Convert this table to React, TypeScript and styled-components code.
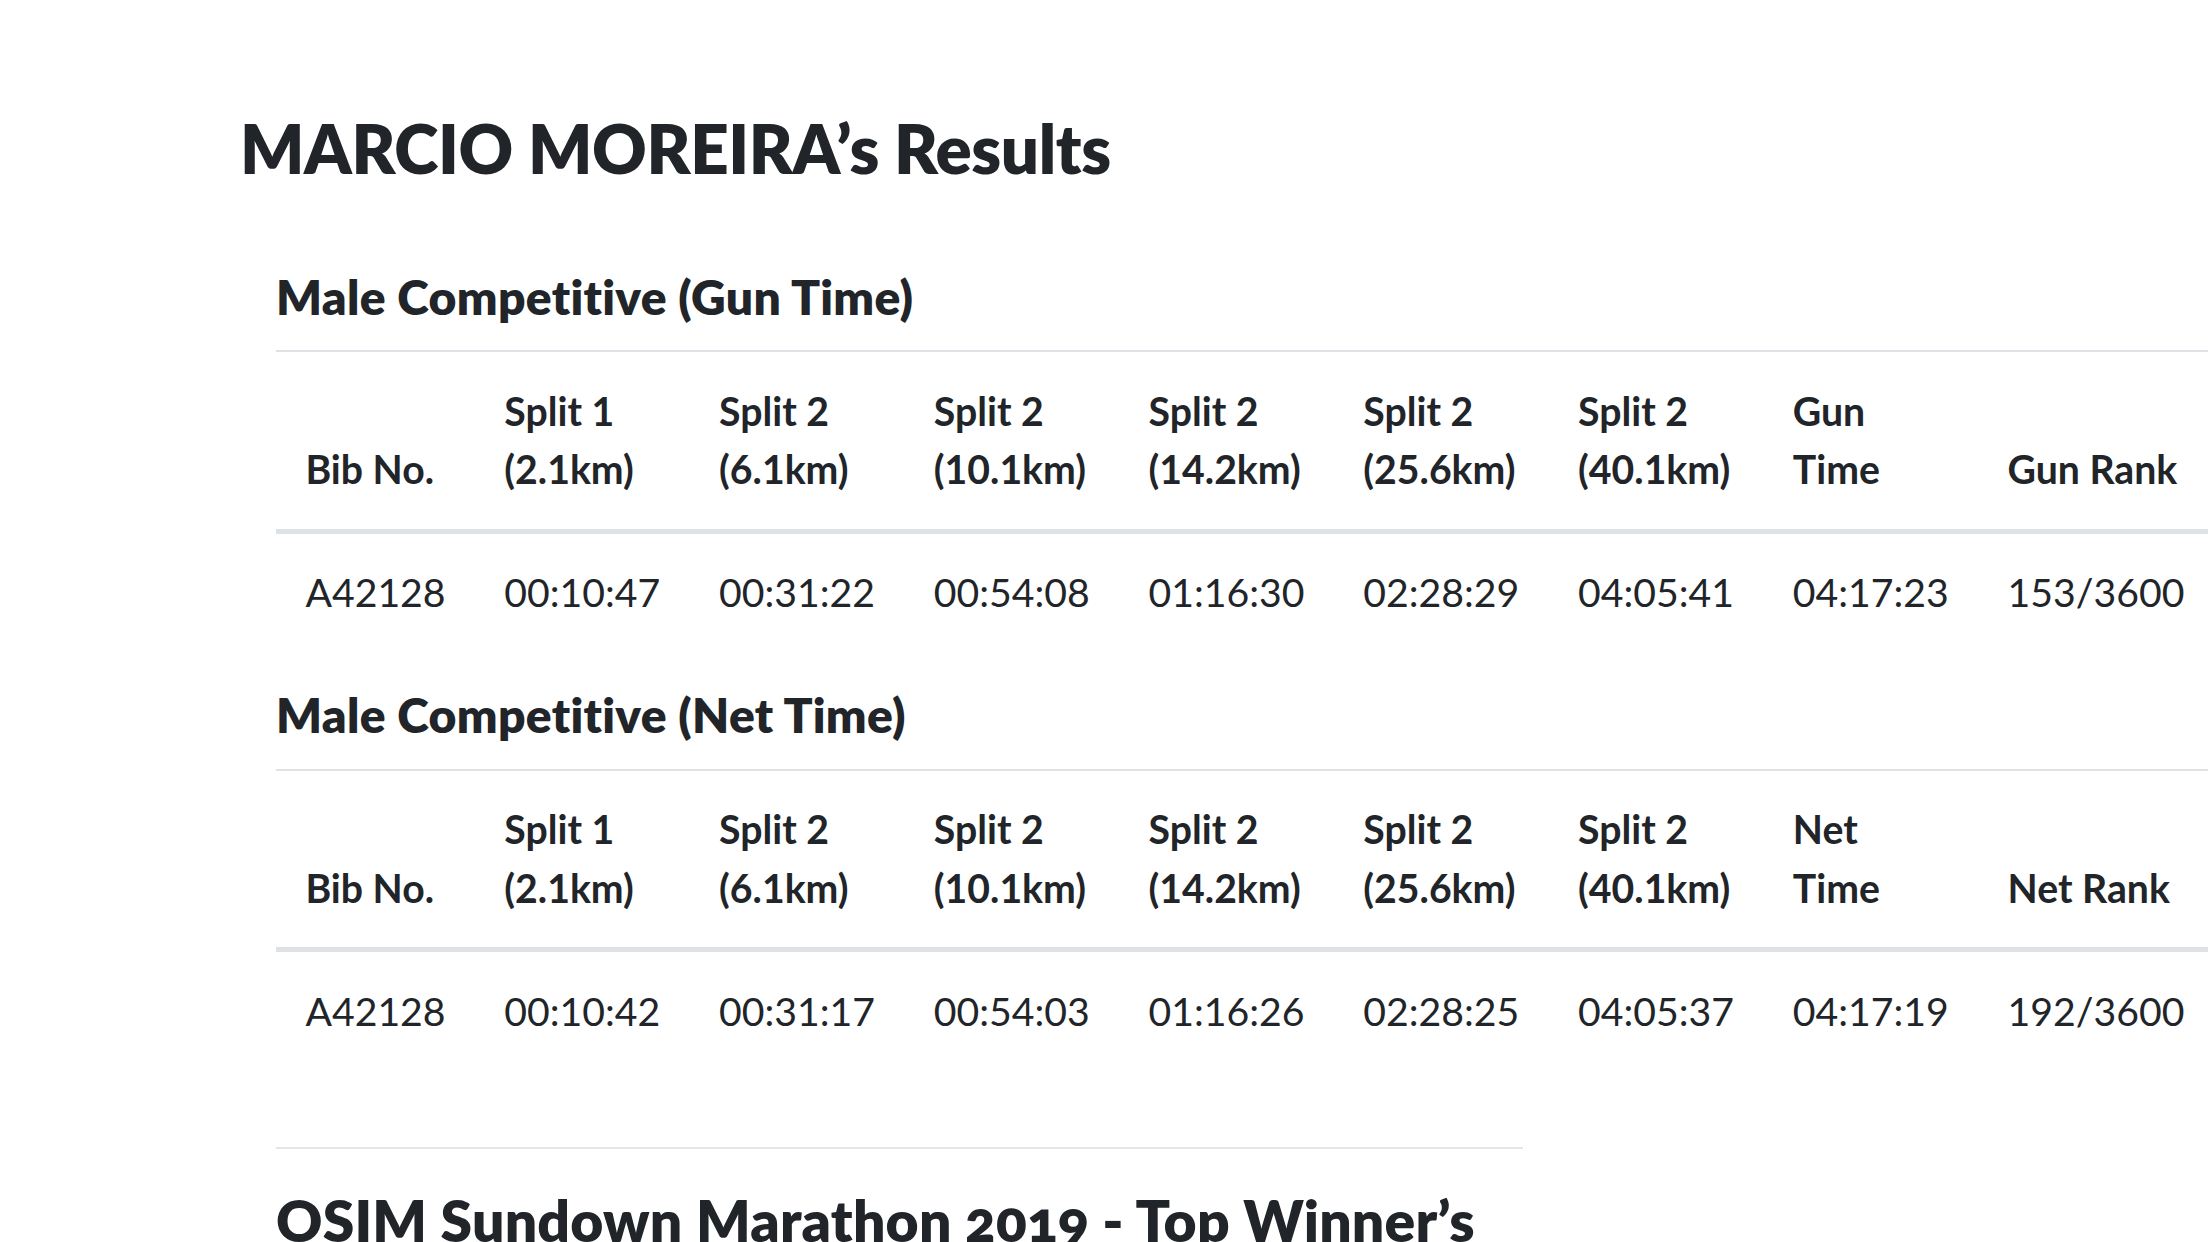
import styled, { createGlobalStyle } from 'styled-components'

const GlobalStyle = createGlobalStyle`
  html, body {
    margin: 0;
    padding: 0;
    overflow: hidden;
    background: #fff;
  }

  body {
    font-family: "Lato", "Open Sans", sans-serif;
    color: #212529;
  }
`

const Page = styled.main`
  width: 1728px;
  margin: 0 auto;
  padding-top: 108px;
`

const PageTitle = styled.h1`
  margin: 0 0 79px;
  font-family: "Lato", sans-serif;
  font-size: 67.2px;
  font-weight: 800;
  line-height: 1.2;
  letter-spacing: -0.4px;
`

const Content = styled.section`
  padding: 0 36px;
`

const CategoryTitle = styled.h5`
  margin: 0 0 25px;
  font-family: "Lato", sans-serif;
  font-size: 48px;
  font-weight: 800;
  line-height: 1.2;
  letter-spacing: 0.3px;
`

const Table = styled.table`
  width: 100%;
  margin-bottom: 35px;
  border-collapse: collapse;
  font-size: 39.2px;
  line-height: 1.5;
`

const HeadCell = styled.th`
  padding: 29.4px;
  text-align: left;
  vertical-align: bottom;
  font-weight: 700;
  border-top: 2px solid #dee2e6;
  border-bottom: 5px solid #dee2e6;
`

const Cell = styled.td`
  padding: 29.4px;
  vertical-align: top;
  font-weight: 400;
  border-top: 2px solid #dee2e6;
`

const Divider = styled.hr`
  width: 1247px;
  margin: 77.5px 0 37px;
  border: 0;
  border-top: 2.4px solid rgba(0, 0, 0, 0.1);
`

const EventTitle = styled.h3`
  width: 1247px;
  margin: 0;
  font-family: "Lato", sans-serif;
  font-size: 57px;
  font-weight: 800;
  line-height: 1.2;
  letter-spacing: 0.2px;
  font-variant-numeric: oldstyle-nums;
`

type Result = {
  title: string
  timeLabel: string
  rankLabel: string
  bib: string
  splits: string[]
  time: string
  rank: string
}

const splitNames = [
  ['Split 1', '(2.1km)'],
  ['Split 2', '(6.1km)'],
  ['Split 2', '(10.1km)'],
  ['Split 2', '(14.2km)'],
  ['Split 2', '(25.6km)'],
  ['Split 2', '(40.1km)'],
]

const results: Result[] = [
  {
    title: 'Male Competitive (Gun Time)',
    timeLabel: 'Gun Time',
    rankLabel: 'Gun Rank',
    bib: 'A42128',
    splits: ['00:10:47', '00:31:22', '00:54:08', '01:16:30', '02:28:29', '04:05:41'],
    time: '04:17:23',
    rank: '153/3600',
  },
  {
    title: 'Male Competitive (Net Time)',
    timeLabel: 'Net Time',
    rankLabel: 'Net Rank',
    bib: 'A42128',
    splits: ['00:10:42', '00:31:17', '00:54:03', '01:16:26', '02:28:25', '04:05:37'],
    time: '04:17:19',
    rank: '192/3600',
  },
]

const ResultTable = ({ result }: { result: Result }) => (
  <>
    <CategoryTitle>{result.title}</CategoryTitle>
    <Table>
      <thead>
        <tr>
          <HeadCell>Bib No.</HeadCell>
          {splitNames.map(([name, dist], i) => (
            <HeadCell key={i}>{name} {dist}</HeadCell>
          ))}
          <HeadCell>{result.timeLabel}</HeadCell>
          <HeadCell>{result.rankLabel}</HeadCell>
        </tr>
      </thead>
      <tbody>
        <tr>
          <Cell>{result.bib}</Cell>
          {result.splits.map((s, i) => (
            <Cell key={i}>{s}</Cell>
          ))}
          <Cell>{result.time}</Cell>
          <Cell>{result.rank}</Cell>
        </tr>
      </tbody>
    </Table>
  </>
)

const App = () => {
  return (
    <>
      <GlobalStyle />
      <Page>
        <PageTitle>MARCIO MOREIRA’s Results</PageTitle>
        <Content>
          {results.map(r => (
            <ResultTable key={r.title} result={r} />
          ))}
          <Divider />
          <EventTitle>OSIM Sundown Marathon 2019 - Top Winner’s Results</EventTitle>
        </Content>
      </Page>
    </>
  )
}

export default App
